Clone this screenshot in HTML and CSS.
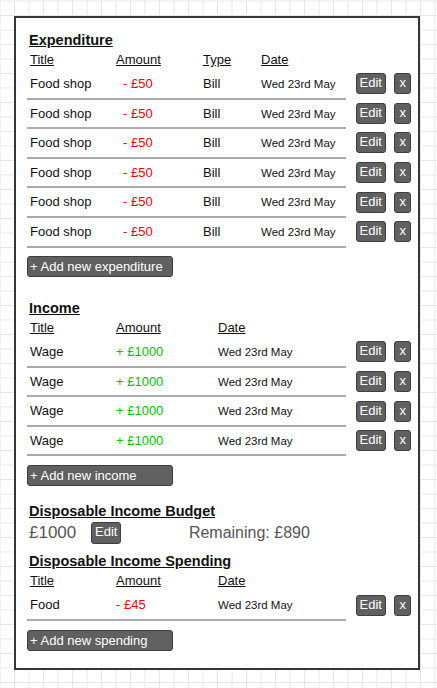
FILE: index.html
```html
<!DOCTYPE html>
<html lang="en">
<head>
<meta charset="utf-8">
<title>Budget</title>
<link rel="stylesheet" href="styles.css">
</head>
<body>
<main class="panel">
  <section class="sec">
    <h2 class="sec-title">Expenditure</h2>
    <div class="row head exp"><span class="c1">Title</span><span class="c2">Amount</span><span class="c3">Type</span><span class="c4">Date</span></div>
    <div class="item"><div class="row line exp"><span class="c1">Food shop</span><span class="c2 neg indent">- £50</span><span class="c3">Bill</span><span class="c4 date">Wed 23rd May</span></div><div class="actions"><button class="btn edit">Edit</button><button class="btn del">x</button></div></div>
    <div class="item"><div class="row line exp"><span class="c1">Food shop</span><span class="c2 neg indent">- £50</span><span class="c3">Bill</span><span class="c4 date">Wed 23rd May</span></div><div class="actions"><button class="btn edit">Edit</button><button class="btn del">x</button></div></div>
    <div class="item"><div class="row line exp"><span class="c1">Food shop</span><span class="c2 neg indent">- £50</span><span class="c3">Bill</span><span class="c4 date">Wed 23rd May</span></div><div class="actions"><button class="btn edit">Edit</button><button class="btn del">x</button></div></div>
    <div class="item"><div class="row line exp"><span class="c1">Food shop</span><span class="c2 neg indent">- £50</span><span class="c3">Bill</span><span class="c4 date">Wed 23rd May</span></div><div class="actions"><button class="btn edit">Edit</button><button class="btn del">x</button></div></div>
    <div class="item"><div class="row line exp"><span class="c1">Food shop</span><span class="c2 neg indent">- £50</span><span class="c3">Bill</span><span class="c4 date">Wed 23rd May</span></div><div class="actions"><button class="btn edit">Edit</button><button class="btn del">x</button></div></div>
    <div class="item"><div class="row line exp"><span class="c1">Food shop</span><span class="c2 neg indent">- £50</span><span class="c3">Bill</span><span class="c4 date">Wed 23rd May</span></div><div class="actions"><button class="btn edit">Edit</button><button class="btn del">x</button></div></div>
    <button class="btn add">+ Add new expenditure</button>
  </section>

  <section class="sec income">
    <h2 class="sec-title">Income</h2>
    <div class="row head inc"><span class="c1">Title</span><span class="c2">Amount</span><span class="c3">Date</span></div>
    <div class="item"><div class="row line inc"><span class="c1">Wage</span><span class="c2 pos">+ £1000</span><span class="c3 date">Wed 23rd May</span></div><div class="actions"><button class="btn edit">Edit</button><button class="btn del">x</button></div></div>
    <div class="item"><div class="row line inc"><span class="c1">Wage</span><span class="c2 pos">+ £1000</span><span class="c3 date">Wed 23rd May</span></div><div class="actions"><button class="btn edit">Edit</button><button class="btn del">x</button></div></div>
    <div class="item"><div class="row line inc"><span class="c1">Wage</span><span class="c2 pos">+ £1000</span><span class="c3 date">Wed 23rd May</span></div><div class="actions"><button class="btn edit">Edit</button><button class="btn del">x</button></div></div>
    <div class="item"><div class="row line inc"><span class="c1">Wage</span><span class="c2 pos">+ £1000</span><span class="c3 date">Wed 23rd May</span></div><div class="actions"><button class="btn edit">Edit</button><button class="btn del">x</button></div></div>
    <button class="btn add">+ Add new income</button>
  </section>

  <section class="sec budget">
    <h2 class="sec-title">Disposable Income Budget</h2>
    <div class="budget-row"><span class="budget-amt">£1000</span><button class="btn edit">Edit</button><span class="remaining">Remaining: £890</span></div>
  </section>

  <section class="sec spending">
    <h2 class="sec-title">Disposable Income Spending</h2>
    <div class="row head inc"><span class="c1">Title</span><span class="c2">Amount</span><span class="c3">Date</span></div>
    <div class="item"><div class="row line inc"><span class="c1">Food</span><span class="c2 neg">- £45</span><span class="c3 date">Wed 23rd May</span></div><div class="actions"><button class="btn edit">Edit</button><button class="btn del">x</button></div></div>
    <button class="btn add">+ Add new spending</button>
  </section>
</main>
</body>
</html>
```

FILE: styles.css
```css
html {
  background-color: #ffffff;
  background-image:
    linear-gradient(to right, #e7e7e7 1px, transparent 1px),
    linear-gradient(to bottom, #e7e7e7 1px, transparent 1px);
  background-size: 14.5px 14.5px;
  background-position: -0.5px 0.5px;
  min-height: 100%;
}

body {
  margin: 0;
  font-family: "Liberation Sans", Arial, sans-serif;
  color: #111;
}

.panel {
  box-sizing: border-box;
  margin: 16px 0 0 14px;
  width: 406px;
  height: 654px;
  border: 2px solid #363636;
  background: #fff;
  padding: 12px 0 0 11px;
}

.sec-title {
  margin: 0;
  padding-left: 2px;
  font-size: 14.5px;
  font-weight: bold;
  line-height: 20px;
  text-decoration: underline;
}

.income { margin-top: 21px; }
.budget { margin-top: 15px; }
.spending { margin-top: 6.5px; }

.row {
  display: flex;
  align-items: baseline;
  width: 319px;
  font-size: 13px;
}

.row span {
  box-sizing: border-box;
  padding-left: 3px;
  white-space: nowrap;
}

.head {
  line-height: 20px;
}
.head span { text-decoration: underline; }

.exp .c1 { width: 86px; }
.exp .c2 { width: 87px; }
.exp .c3 { width: 58px; }
.exp .c4 { width: 88px; }

.inc .c1 { width: 86px; }
.inc .c2 { width: 102px; }
.inc .c3 { width: 131px; }

.item {
  display: flex;
  align-items: center;
}

.line {
  box-sizing: border-box;
  height: 29.6px;
  line-height: 27.6px;
  border-bottom: 2px solid #ababab;
}

.date { font-size: 11.5px; }

.neg { color: #ff0000; }
.pos { color: #00c400; }
.indent { padding-left: 10px !important; }

.actions {
  display: flex;
  gap: 8.6px;
  margin-left: 9.7px;
  margin-bottom: 2px;
}

.btn {
  box-sizing: border-box;
  height: 21px;
  margin: 0;
  border: 1px solid #3e3e3e;
  border-radius: 3px;
  background: #606060;
  color: #fff;
  font-family: "Liberation Sans", Arial, sans-serif;
  font-size: 13px;
  line-height: 17px;
  padding: 0 0 2px;
  text-align: center;
}

.edit { width: 30px; }
.del { width: 17px; }

.add {
  display: block;
  width: 146px;
  margin-top: 8.5px;
  text-align: left;
  padding: 0 0 0 2px;
  line-height: 19px;
}

.budget-row {
  display: flex;
  align-items: center;
  height: 24px;
  padding-left: 2px;
  color: #555;
}

.budget-amt {
  font-size: 17px;
  line-height: 24px;
}

.budget-row .edit {
  width: 30px;
  height: 22px;
  margin-left: 15px;
  line-height: 18px;
}

.remaining {
  margin-left: 67.6px;
  font-size: 16px;
  line-height: 24px;
}
```
